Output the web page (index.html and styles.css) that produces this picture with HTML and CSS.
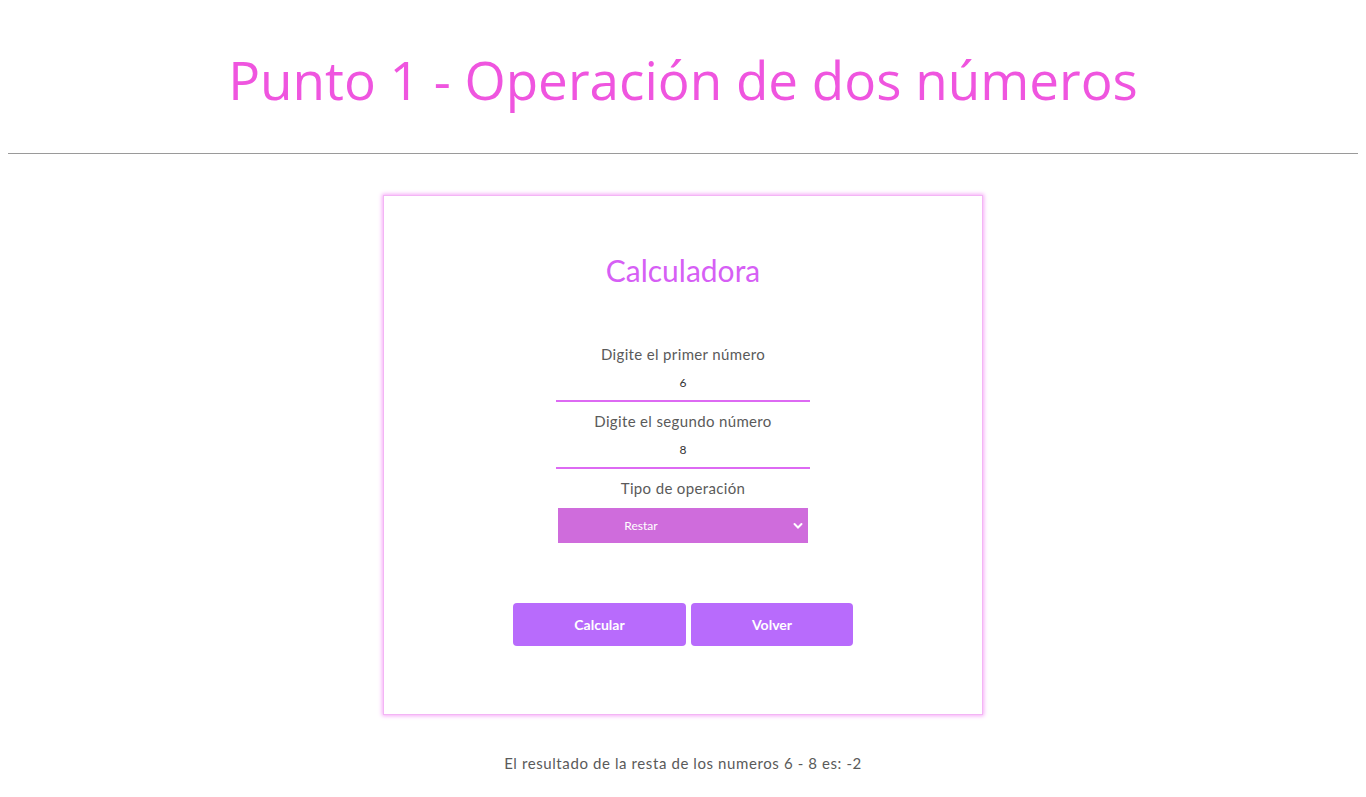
FILE: index.html
```html
<!DOCTYPE html>
<html lang="es">
<head>
<meta charset="utf-8">
<title>Punto 1</title>
<link rel="stylesheet" href="styles.css">
</head>
<body>
<h1 class="title">Punto 1 - Operación de dos números</h1>
<hr class="rule">
<main class="wrap">
  <form class="card">
    <h2 class="card-title">Calculadora</h2>
    <div class="fields">
      <label class="label" for="n1">Digite el primer número</label>
      <input class="num" id="n1" type="text" value="6">
      <label class="label" for="n2">Digite el segundo número</label>
      <input class="num" id="n2" type="text" value="8">
      <label class="label" for="op">Tipo de operación</label>
      <div class="select">
        <span class="select-text">Restar</span>
        <svg class="chev" width="10" height="8" viewBox="0 0 10 8"><path d="M1.5 2 L5 5.5 L8.5 2" fill="none" stroke="#fff" stroke-width="2" stroke-linecap="round"/></svg>
      </div>
    </div>
    <div class="actions">
      <button type="button" class="btn btn-calc">Calcular</button>
      <button type="button" class="btn btn-back">Volver</button>
    </div>
  </form>
  <p class="result">El resultado de la resta de los numeros 6 - 8 es: -2</p>
</main>
</body>
</html>
```
FILE: styles.css
```css
body {
  margin: 8px;
  background: #fff;
  font-family: "Lato", "Noto Sans", sans-serif;
}
.title {
  margin: 37px 0 0;
  text-align: center;
  font-family: "Open Sans", "Noto Sans", sans-serif;
  font-weight: 400;
  font-size: 53px;
  line-height: 70px;
  color: #ef55df;
}
.rule {
  margin: 38px 0 0;
  border: 0;
  border-top: 1px solid #9a9a9a;
  height: 0;
}
.wrap {
  display: flex;
  flex-direction: column;
  align-items: center;
}
.card {
  margin-top: 41px;
  width: 600px;
  height: 520px;
  box-sizing: border-box;
  border: 1px solid #f3b5f5;
  box-shadow: 0 0 4px 1px #f6a8f8;
  display: flex;
  flex-direction: column;
  align-items: center;
}
.card-title {
  margin: 56px 0 0;
  font-weight: 400;
  font-size: 30px;
  line-height: 36px;
  color: #d65ff5;
}
.fields {
  margin-top: 56px;
  display: flex;
  flex-direction: column;
  align-items: center;
}
.label {
  font-size: 15px;
  line-height: 20px;
  letter-spacing: 0.35px;
  color: #5a5a5a;
}
.num {
  width: 254px;
  box-sizing: border-box;
  height: 34px;
  margin: 4px 0 9px;
  padding: 0 0 4px;
  border: 0;
  border-bottom: 2px solid #dd6af3;
  text-align: center;
  font-family: "Lato", sans-serif;
  font-size: 12px;
  color: #333;
  outline: none;
}
.select {
  margin-top: 10px;
  width: 250px;
  height: 35px;
  background: #cf6cdc;
  display: flex;
  align-items: center;
  position: relative;
}
.select-text {
  width: 166px;
  text-align: center;
  color: #fff;
  font-size: 12px;
}
.chev {
  position: absolute;
  right: 5px;
  top: 14px;
}
.actions {
  margin-top: 60px;
  display: flex;
  gap: 5px;
}
.btn {
  height: 43px;
  border: 0;
  border-radius: 4px;
  background: #b86bfc;
  color: #fff;
  font-family: "Lato", sans-serif;
  font-weight: 700;
  font-size: 14px;
}
.btn-calc { width: 173px; }
.btn-back { width: 162px; }
.result {
  margin: 38px 0 0;
  font-size: 15px;
  line-height: 20px;
  letter-spacing: 0.6px;
  color: #5a5a5a;
}
```
